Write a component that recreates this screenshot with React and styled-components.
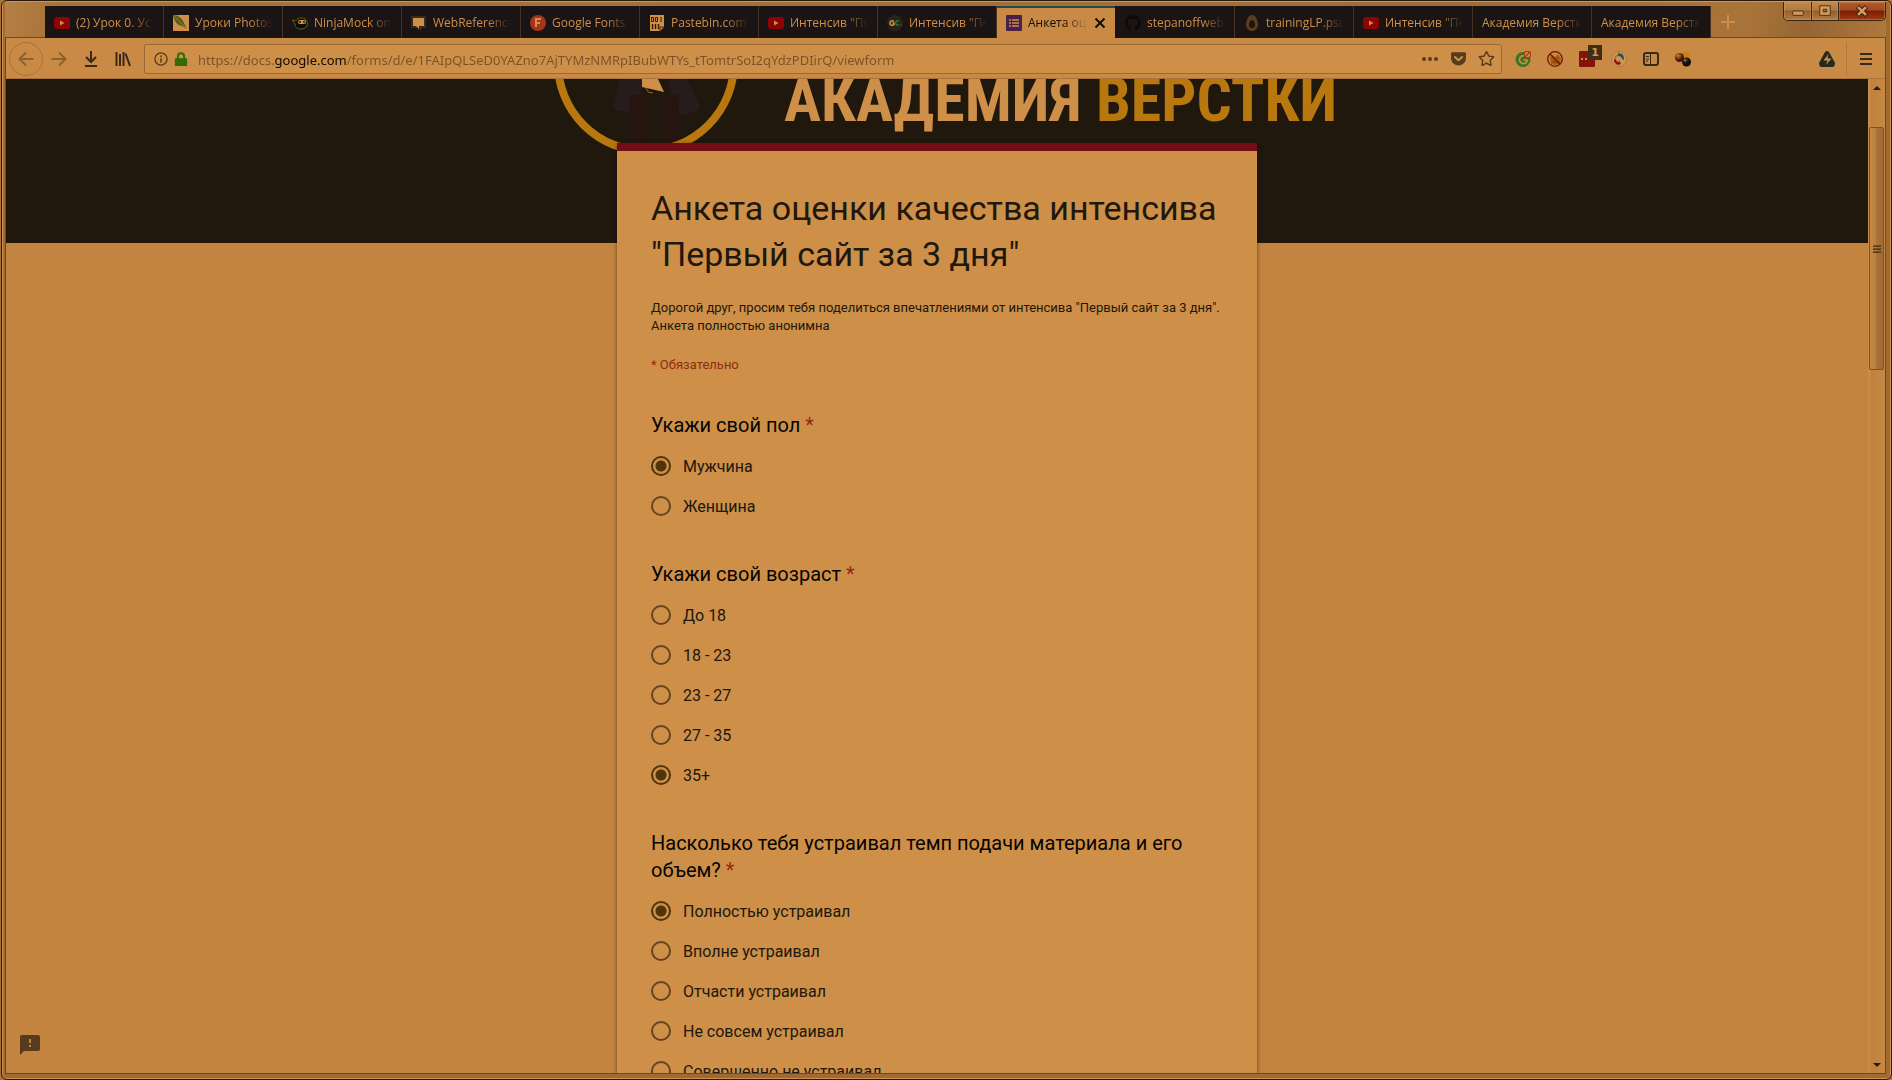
import React from "react";
import styled, { createGlobalStyle, css } from "styled-components";
import { FaGithub, FaGetPocket, FaRegStar } from "react-icons/fa";
import { MdFeedback } from "react-icons/md";

const c = {
  frame: "#9d6c36",
  frameLine: "#70491f",
  frameLight: "#cf9250",
  outline: "#2a1a0c",
  tab: "#1a1415",
  tabText: "#cd8f4a",
  toolbar: "#c98a45",
  field: "#ce9048",
  banner: "#20170d",
  page: "#c38440",
  card: "#ce8f48",
  accent: "#730c16",
  gold: "#b9780f",
  ink: "#20170d",
  icon: "#3b2817",
  required: "#952a12",
};

const GlobalStyle = createGlobalStyle`
  *, *::before, *::after { box-sizing: border-box; }
  html, body { margin: 0; height: 100%; background: #a8733a; }
  body { font-family: Roboto, "Liberation Sans", sans-serif; overflow: hidden; }
  button, input { font: inherit; color: inherit; margin: 0; }
  button { border: 0; padding: 0; background: none; }
  svg { display: block; flex: none; }
`;

const Window = styled.div`
  display: flex;
  flex-direction: column;
  height: 100vh;
  margin-left: 1px;
  padding: 0 5px 5px 3px;
  border: 1px solid ${c.outline};
  border-radius: 6px;
  background: ${c.frame};
  box-shadow: inset 0 0 0 1px ${c.frameLight};
`;

/* ---------- title bar ---------- */

const TitleBar = styled.header`
  display: flex;
  align-items: flex-end;
  height: 36px;
  flex: none;
  padding-left: 40px;
  margin-top: 1px;
  background: linear-gradient(100deg, #b58045 0, #a8743a 50px, #9f6d36 1500px, #a8743a 1720px, #966532 1780px, #b27c41 1870px);
  box-shadow: inset 0 -1px 0 ${c.frameLine};
`;

const Tabs = styled.nav`
  display: flex;
  min-width: 0;
`;

const TabButton = styled.button`
  display: flex;
  align-items: center;
  gap: 6px;
  width: 119px;
  height: 32px;
  min-width: 0;
  padding: 1px 9px 0 9px;
  border-right: 1px solid #4a3220;
  background: ${c.tab};
  color: ${c.tabText};
  font: 500 12px/16px "Open Sans", "Noto Sans", sans-serif;
  ${(p) =>
    p.$active &&
    css`
      background: ${c.toolbar};
      color: #140c05;
      border-right-color: ${c.tab};
      box-shadow: inset 0 2px 0 #26494a;
    `}
`;

const TabLabel = styled.span`
  flex: 1;
  min-width: 0;
  overflow: hidden;
  white-space: nowrap;
  text-align: left;
  mask-image: linear-gradient(to left, transparent 0, #000 24px);
`;

const NewTab = styled.button`
  display: grid;
  place-items: center;
  width: 34px;
  height: 32px;
`;

const WindowControls = styled.div`
  display: flex;
  align-self: flex-start;
  height: 19px;
  margin-left: auto;
  border: 1px solid #3a2412;
  border-top: 0;
  border-radius: 0 0 5px 5px;
  overflow: hidden;
`;

const ControlButton = styled.button`
  display: grid;
  place-items: center;
  width: ${(p) => (p.$close ? 47 : 27)}px;
  border-left: ${(p) => (p.$first ? 0 : 1)}px solid #3a2412;
  background: ${(p) =>
    p.$close
      ? "linear-gradient(#b0592b, #a04a22 45%, #7c1c08 50%, #a03a12)"
      : "linear-gradient(#c08a4d, #b17a40 45%, #8f6030 50%, #b37c42)"};
  box-shadow: inset 0 0 0 1px rgba(214, 150, 80, 0.45);
`;

/* ---------- toolbar ---------- */

const Toolbar = styled.div`
  display: flex;
  align-items: center;
  height: 41px;
  flex: none;
  padding: 0 3px;
  background: ${c.toolbar};
  border: solid ${c.frameLine};
  border-width: 0 1px;
  box-shadow: inset 0 -1px 0 #a8733a;
`;

const ToolButton = styled.button`
  display: grid;
  place-items: center;
  position: relative;
  width: 32px;
  height: 32px;
  flex: none;
  color: ${c.icon};
`;

const BackButton = styled(ToolButton)`
  width: 34px;
  height: 34px;
  border: 1px solid #a8733a;
  border-radius: 50%;
`;

const AddressBar = styled.div`
  display: flex;
  align-items: center;
  flex: 1;
  min-width: 0;
  height: 30px;
  margin: 0 5px;
  padding: 0 1px 0 6px;
  border: 1px solid #9c6936;
  border-radius: 2px;
  background: ${c.field};
`;

const AddressIcon = styled.button`
  display: grid;
  place-items: center;
  width: ${(p) => p.$w}px;
  height: 28px;
  flex: none;
  color: ${(p) => p.$color || "#573b1d"};
`;

const AddressInput = styled.input`
  flex: 1;
  min-width: 0;
  height: 28px;
  padding: 2px 0 0;
  margin-left: 7px;
  border: 0;
  outline: 0;
  font-family: "Noto Sans", "Open Sans", sans-serif;
  font-size: 13px;
  color: transparent;
  background: linear-gradient(90deg, #79512a 76px, #0d0803 76px 149px, #79512a 149px);
  background-clip: text;
  -webkit-background-clip: text;
`;

const Extensions = styled.div`
  display: flex;
  margin-right: 112px;
`;

const Badge = styled.span`
  position: absolute;
  top: 2px;
  right: 1px;
  width: 14px;
  height: 15px;
  background: #3f2d18;
  color: #d49650;
  font: 700 11px/15px "DejaVu Sans", sans-serif;
  text-align: center;
`;

const Separator = styled.div`
  width: 1px;
  height: 34px;
  margin: 0 3px;
  background: #b27a3d;
`;

/* ---------- page ---------- */

const Viewport = styled.div`
  display: flex;
  flex: 1;
  min-height: 0;
  border: solid ${c.frameLine};
  border-width: 0 1px 1px;
`;

const Page = styled.main`
  position: relative;
  flex: 1;
  min-width: 0;
  overflow: hidden;
  background: ${c.page};
`;

const Banner = styled.div`
  height: 164px;
  background: ${c.banner};
  overflow: hidden;
`;

const BannerRow = styled.div`
  display: flex;
  align-items: flex-start;
  gap: 46px;
  max-width: 792px;
  margin: 0 auto;
  padding-left: 13px;
`;

const BannerTitle = styled.div`
  font: 700 62px/42px "Liberation Sans Narrow", "Roboto Condensed", Roboto, sans-serif;
  color: ${c.card};
  white-space: nowrap;

  span {
    color: ${c.gold};
  }
`;

const Card = styled.form`
  position: relative;
  max-width: 640px;
  margin: -100px auto 0;
  padding: 34px;
  border-top: 8px solid ${c.accent};
  background: ${c.card};
  box-shadow: 0 1px 4px rgba(30, 15, 0, 0.55);
`;

const Title = styled.h1`
  margin: 0 0 22px;
  font-size: 34px;
  line-height: 46px;
  font-weight: 400;
  color: ${c.ink};
`;

const Description = styled.p`
  margin: 0 0 21px;
  font-size: 13px;
  line-height: 18px;
  color: ${c.ink};
`;

const RequiredNote = styled.p`
  margin: 0 0 38px;
  font-size: 13px;
  line-height: 18px;
  color: ${c.required};
`;

const Question = styled.fieldset`
  min-width: 0;
  margin: 0 0 35px;
  padding: 0;
  border: 0;
`;

const QuestionTitle = styled.legend`
  padding: 0;
  margin-bottom: 7px;
  font-size: 20px;
  line-height: 27px;
  color: #060402;

  span {
    color: ${c.required};
  }
`;

const Option = styled.label`
  display: flex;
  align-items: center;
  gap: 12px;
  height: 40px;
  font-size: 16px;
  color: ${c.ink};
`;

const Radio = styled.input`
  appearance: none;
  width: 20px;
  height: 20px;
  flex: none;
  border: 2px solid #65441f;
  border-radius: 50%;

  &:checked {
    border-color: #4f340c;
    background: radial-gradient(circle, #4f340c 5px, transparent 6px);
  }
`;

const FeedbackButton = styled.button`
  position: absolute;
  left: 12px;
  bottom: 16px;
  color: #573b1f;
`;

/* ---------- scroll bar ---------- */

const ScrollBar = styled.div`
  display: flex;
  flex-direction: column;
  width: 17px;
  flex: none;
  padding: 0 1px;
  background: linear-gradient(90deg, #cb8d49, #c18240 4px, #c68844);
`;

const ScrollArrow = styled.button`
  display: grid;
  place-items: center;
  height: 17px;
`;

const Track = styled.div`
  flex: ${(p) => p.$share} 0 0;
`;

const Thumb = styled(Track)`
  display: grid;
  place-items: center;
  border: 1px solid #7b5126;
  border-radius: 2px;
  background: linear-gradient(90deg, #c68845, #b97f40 45%, #a87238 50%, #a06b34);
`;

/* ---------- drawings ---------- */

const Svg = ({ s = 16, children, ...rest }) => (
  <svg width={s} height={s} viewBox="0 0 16 16" fill="none" aria-hidden="true" {...rest}>
    {children}
  </svg>
);

const YouTube = () => (
  <Svg>
    <rect x="0" y="2" width="16" height="12" rx="3" fill="#8e0404" />
    <path d="M6 5.5v5l4.5-2.5z" fill={c.card} />
  </Svg>
);

const Feather = () => (
  <Svg>
    <path d="M0 0h16v16H0z" fill={c.card} />
    <path d="M0 0c5 0 9 3 11 8l3 6-5-3C4 10 1 6 0 0z" fill="#5b5a1c" />
    <path d="M1 1l13 13" stroke="#8a8640" />
  </Svg>
);

const Ninja = () => (
  <Svg>
    <path d="M0 5l4 1c2-4 8-4 10-1 3 4 1 9-5 9-4 0-6-2-6-5z" fill="#0e0c08" stroke="#5c6a0a" />
    <rect x="6" y="5" width="8" height="4" rx="2" fill={c.card} />
    <path d="M8 6v2M12 6v2" stroke="#1a1415" strokeWidth="1.5" />
  </Svg>
);

const Bubble = () => (
  <Svg>
    <path d="M0 1h15v12h-4l-1 3-3-3H0z" fill="#3d2916" />
    <path d="M2 3h11v8H8v3l-3-3H2z" fill={c.card} />
  </Svg>
);

const FontsIcon = () => (
  <Svg>
    <circle cx="8" cy="8" r="8" fill="#a8321a" />
    <path d="M6 12V4h5M6 8h4" stroke={c.card} strokeWidth="2" />
  </Svg>
);

const Paste = () => (
  <Svg>
    <path d="M1 0h14v12l-4 4H1z" fill={c.card} />
    <path d="M2.500 2.500h2v4h-2zM6.500 2.500h2v4h-2zM12 2v5" stroke="#2b1a0c" />
    <path d="M3.500 9v5M6.500 9v5M9.500 9v5" stroke="#2b1a0c" strokeWidth="1.400" />
    <path d="M11 16v-4h4" stroke="#3d2916" />
  </Svg>
);

const Gc = () => (
  <Svg>
    <circle cx="8" cy="8" r="8" fill="#27241a" />
    <path d="M7 6.500a2.300 2.300 0 1 0 0 3V8H5.500" stroke={c.card} strokeWidth="1.500" />
    <path d="M12 6.500a2 2 0 1 0 0 3M13.500 10h1" stroke="#2f7034" strokeWidth="1.500" />
  </Svg>
);

const FormsIcon = () => (
  <Svg>
    <rect width="16" height="16" rx="1" fill="#48204a" />
    <path d="M3 5h2M3 8h2M3 11h2M6 5h7M6 8h7M6 11h7" stroke={c.card} strokeWidth="1.600" />
  </Svg>
);

const Egg = () => (
  <Svg>
    <path d="M8 0c4 0 6 6 6 10a6 6 0 0 1-12 0c0-4 2-10 6-10zm0 5c-2 0-3 3-3 5a3 3 0 0 0 6 0c0-2-1-5-3-5z" fill="#5a3d1e" fillRule="evenodd" />
  </Svg>
);

const Arrow = ({ flip }) => (
  <Svg transform={flip ? "scale(-1 1)" : undefined}>
    <path d="M15.500 8H1.500M8 1.500L1.500 8L8 14.500" stroke="#8d6030" strokeWidth="2" />
  </Svg>
);

const Grammar = () => (
  <Svg>
    <circle cx="8" cy="8.500" r="7.500" fill="#3c7420" />
    <path d="M11.500 6a4 4 0 1 0 .5 4.500V9H8.500" stroke={c.card} strokeWidth="1.600" />
    <circle cx="12.500" cy="3.500" r="3.300" fill={c.card} stroke="#ac3219" strokeWidth="1.200" />
    <path d="M14.500 1.500l-4 4" stroke="#ac3219" strokeWidth="1.200" />
  </Svg>
);

const NoBug = () => (
  <Svg>
    <path d="M3 6l2-2 3 2 3-3 3 5-1 5-5 1-4-1z" fill="#a85d09" />
    <path d="M6 8h1M10 7h1M6 11h5" stroke="#6b3b08" />
    <circle cx="8" cy="8" r="7.300" stroke="#760f10" strokeWidth="1.300" />
    <path d="M3 3l10 10" stroke="#760f10" strokeWidth="1.300" />
  </Svg>
);

const LastPass = () => (
  <Svg>
    <rect width="16" height="16" rx="1" fill="#86120c" />
    <path d="M2 8h2M6 8h2M10 8h2" stroke={c.card} strokeWidth="2" />
  </Svg>
);

const Sync = () => (
  <Svg>
    <circle cx="8" cy="8" r="7.500" fill="#cf9552" stroke="#a58248" />
    <path d="M4 11c-1-3 0-6 3-7" stroke="#9c7040" strokeWidth="1.500" />
    <path d="M7 2l4 1c2 2 2 4 2 6l-2-1c0-2-2-3-4-3z" fill="#2a5250" />
    <path d="M3 9l2-1c0 2 1 3 3 3V9l2 4-3 1c-2-1-4-2-4-5z" fill="#9a130c" />
  </Svg>
);

const Sidebar = () => (
  <Svg>
    <rect x="1" y="2" width="14" height="12" rx="2" stroke={c.icon} strokeWidth="2" />
    <path d="M7.500 2v12M3 5.500h3M3 8h3M3 10h2" stroke={c.icon} />
  </Svg>
);

const Spheres = () => (
  <Svg>
    <defs>
      <radialGradient id="sphereRed" cx=".35" cy=".3"><stop stopColor="#d87540" /><stop offset="1" stopColor="#501105" /></radialGradient>
      <radialGradient id="sphereDark" cx=".35" cy=".3"><stop stopColor="#b78757" /><stop offset=".4" stopColor="#302523" /><stop offset="1" stopColor="#0c0a0c" /></radialGradient>
    </defs>
    <circle cx="11" cy="5" r="4.500" fill="#c88112" />
    <circle cx="4.500" cy="6.500" r="4.500" fill="url(#sphereRed)" />
    <circle cx="11.500" cy="11" r="4.500" fill="url(#sphereDark)" />
  </Svg>
);

const Bolt = () => (
  <Svg>
    <path d="M6 1q2-2 4 0l6 11q0 3-2 4H2q-2-1-2-4z" fill="#26291f" />
    <path d="M9.500 3L4.500 9.500h4L7 14l5.500-6.500H8.500z" fill={c.card} />
  </Svg>
);

const GuyLogo = () => (
  <svg width="184" height="76" viewBox="0 108 184 76" aria-hidden="true">
    <path d="M67 104l-8 33q8 6 25 3l6-36zM112 104l12 39q12 2 22-6l-14-33z" fill="#271b1e" />
    <path d="M76 124h14l2 60H76zM106 124h18l4 60h-14z" fill="#25140f" />
    <path d="M88 108h16l6 13-22-5z" fill={c.card} />
    <path d="M92 117l2 4 5 1" stroke="#8e6330" fill="none" />
    <circle cx="92" cy="92" r="88" fill="none" stroke={c.gold} strokeWidth="8" />
  </svg>
);

/* ---------- data ---------- */

const tabs = [
  { icon: <YouTube />, label: "(2) Урок 0. Уста" },
  { icon: <Feather />, label: "Уроки Photosh" },
  { icon: <Ninja />, label: "NinjaMock onli" },
  { icon: <Bubble />, label: "WebReference" },
  { icon: <FontsIcon />, label: "Google Fonts" },
  { icon: <Paste />, label: "Pastebin.com -" },
  { icon: <YouTube />, label: 'Интенсив "Пер' },
  { icon: <Gc />, label: 'Интенсив "Пер' },
  { icon: <FormsIcon />, label: "Анкета оцен", active: true },
  { icon: <FaGithub size={16} color="#0d0a09" />, label: "stepanoffweb/" },
  { icon: <Egg />, label: "trainingLP.psd" },
  { icon: <YouTube />, label: 'Интенсив "Пер' },
  { label: "Академия Верстки" },
  { label: "Академия Верстки" },
];

const questions = [
  { id: "sex", title: "Укажи свой пол", options: ["Мужчина", "Женщина"], selected: 0 },
  { id: "age", title: "Укажи свой возраст", options: ["До 18", "18 - 23", "23 - 27", "27 - 35", "35+"], selected: 4 },
  {
    id: "pace",
    title: "Насколько тебя устраивал темп подачи материала и его объем?",
    options: ["Полностью устраивал", "Вполне устраивал", "Отчасти устраивал", "Не совсем устраивал", "Совершенно не устраивал"],
    selected: 0,
  },
];

const extensions = [
  { name: "Grammar", icon: <Grammar /> },
  { name: "Blocker", icon: <NoBug /> },
  { name: "Passwords", icon: <LastPass />, badge: "1" },
  { name: "Sync", icon: <Sync /> },
  { name: "Sidebar", icon: <Sidebar /> },
  { name: "Spheres", icon: <Spheres /> },
];

const url = "https://docs.google.com/forms/d/e/1FAIpQLSeD0YAZno7AjTYMzNMRpIBubWTYs_tTomtrSoI2qYdzPDIirQ/viewform";

export default function App() {
  return (
    <>
      <GlobalStyle />
      <Window>
        <TitleBar>
          <Tabs>
            {tabs.map((t, i) => (
              <TabButton key={i} type="button" $active={t.active}>
                {t.icon}
                <TabLabel>{t.label}</TabLabel>
                {t.active && (
                  <Svg s={12}>
                    <path d="M2 2l12 12M14 2L2 14" stroke="#140c05" strokeWidth="2.600" />
                  </Svg>
                )}
              </TabButton>
            ))}
          </Tabs>
          <NewTab type="button" aria-label="Новая вкладка">
            <Svg s={14}><path d="M8 0v16M0 8h16" stroke={c.card} strokeWidth="2.200" /></Svg>
          </NewTab>
          <WindowControls>
            <ControlButton type="button" aria-label="Свернуть" $first>
              <Svg s={14}><rect x="2" y="8" width="12" height="5" rx="1" fill="#d49a58" stroke="#3d2916" /></Svg>
            </ControlButton>
            <ControlButton type="button" aria-label="Развернуть">
              <Svg s={14}><path d="M2 2h12v11H2zM6 6h4v3H6z" fill="#d49a58" stroke="#3d2916" fillRule="evenodd" /></Svg>
            </ControlButton>
            <ControlButton type="button" aria-label="Закрыть" $close>
              <Svg s={14}>
                <path d="M3 3l10 10M13 3L3 13" stroke="#3d2016" strokeWidth="5.500" />
                <path d="M3.500 3.500l9 9M12.500 3.500l-9 9" stroke="#d49a58" strokeWidth="3" />
              </Svg>
            </ControlButton>
          </WindowControls>
        </TitleBar>

        <Toolbar>
          <BackButton type="button" aria-label="Назад"><Arrow /></BackButton>
          <ToolButton type="button" aria-label="Вперёд"><Arrow flip /></ToolButton>
          <ToolButton type="button" aria-label="Загрузки">
            <Svg><path d="M8 0v11M3 6l5 5 5-5M2 15h12" stroke={c.icon} strokeWidth="2" /></Svg>
          </ToolButton>
          <ToolButton type="button" aria-label="Библиотека">
            <Svg><path d="M1.500 1v14M5 3v12M8.500 1v14M10.500 2.500L15 15" stroke={c.icon} strokeWidth="2" /></Svg>
          </ToolButton>
          <AddressBar>
            <AddressIcon type="button" aria-label="Сведения о сайте" $w={20}>
              <Svg s={14}><circle cx="8" cy="8" r="7" stroke="currentColor" strokeWidth="1.500" /><path d="M8 7v5M8 4v2" stroke="currentColor" strokeWidth="1.700" /></Svg>
            </AddressIcon>
            <AddressIcon type="button" aria-label="Защищённое соединение" $w={20} $color="#316b05">
              <Svg s={14}>
                <path d="M4.500 8V5a3.500 3.500 0 0 1 7 0v3" stroke="currentColor" strokeWidth="2.200" />
                <rect x="1" y="7" width="14" height="9" rx="1" fill="currentColor" />
              </Svg>
            </AddressIcon>
            <AddressInput aria-label="Адрес" defaultValue={url} spellCheck={false} />
            <AddressIcon type="button" aria-label="Действия" $w={28}>
              <Svg><circle cx="2" cy="8" r="2" fill="currentColor" /><circle cx="8" cy="8" r="2" fill="currentColor" /><circle cx="14" cy="8" r="2" fill="currentColor" /></Svg>
            </AddressIcon>
            <AddressIcon type="button" aria-label="Pocket" $w={28}><FaGetPocket size={17} /></AddressIcon>
            <AddressIcon type="button" aria-label="В закладки" $w={28}><FaRegStar size={17} /></AddressIcon>
          </AddressBar>
          <Extensions>
            {extensions.map((e) => (
              <ToolButton key={e.name} type="button" aria-label={e.name}>
                {e.icon}
                {e.badge && <Badge>{e.badge}</Badge>}
              </ToolButton>
            ))}
          </Extensions>
          <ToolButton type="button" aria-label="Ускорение"><Bolt /></ToolButton>
          <Separator />
          <ToolButton type="button" aria-label="Меню">
            <Svg><path d="M2 3h12M2 8h12M2 13h12" stroke={c.icon} strokeWidth="2" /></Svg>
          </ToolButton>
        </Toolbar>

        <Viewport>
          <Page>
            <Banner>
              <BannerRow>
                <GuyLogo />
                <BannerTitle>АКАДЕМИЯ <span>ВЕРСТКИ</span></BannerTitle>
              </BannerRow>
            </Banner>
            <Card>
              <Title>Анкета оценки качества интенсива "Первый сайт за 3 дня"</Title>
              <Description>
                Дорогой друг, просим тебя поделиться впечатлениями от интенсива "Первый сайт за 3 дня".
                <br />
                Анкета полностью анонимна
              </Description>
              <RequiredNote>* Обязательно</RequiredNote>
              {questions.map((q) => (
                <Question key={q.id}>
                  <QuestionTitle>{q.title} <span>*</span></QuestionTitle>
                  {q.options.map((o, i) => (
                    <Option key={o}>
                      <Radio type="radio" name={q.id} defaultChecked={i === q.selected} />
                      {o}
                    </Option>
                  ))}
                </Question>
              ))}
            </Card>
            <FeedbackButton type="button" aria-label="Сообщить о проблеме"><MdFeedback size={24} /></FeedbackButton>
          </Page>
          <ScrollBar>
            <ScrollArrow type="button" aria-label="Вверх"><Svg s={8}><path d="M0 12l8-8 8 8z" fill="#2b1a0c" /></Svg></ScrollArrow>
            <Track $share={31} />
            <Thumb $share={242}>
              <Svg s={8}><path d="M0 2h16M0 8h16M0 14h16" stroke="#3d2611" strokeWidth="2.500" /></Svg>
            </Thumb>
            <Track $share={687} />
            <ScrollArrow type="button" aria-label="Вниз"><Svg s={8}><path d="M0 4l8 8 8-8z" fill="#2b1a0c" /></Svg></ScrollArrow>
          </ScrollBar>
        </Viewport>
      </Window>
    </>
  );
}
